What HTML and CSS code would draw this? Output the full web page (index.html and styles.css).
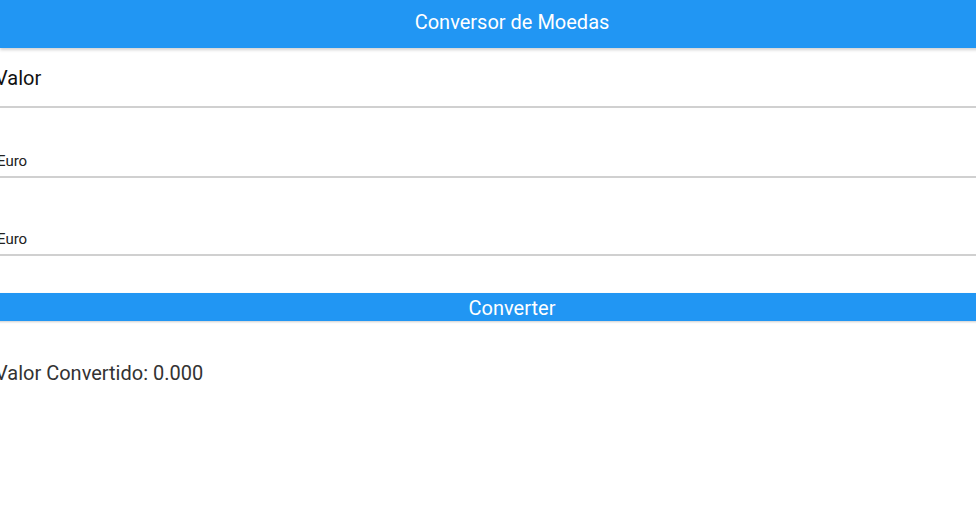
FILE: index.html
```html
<!DOCTYPE html>
<html lang="pt">
<head>
<meta charset="utf-8">
<title>Conversor de Moedas</title>
<link rel="stylesheet" href="styles.css">
</head>
<body>
<div class="page">
<header class="appbar">Conversor de Moedas</header>
<main class="content">
  <div class="field field-input"><span class="field-text">Valor</span></div>
  <div class="field field-select"><span class="select-text">Euro</span></div>
  <div class="field field-select"><span class="select-text">Euro</span></div>
  <button class="btn" type="button">Converter</button>
  <p class="result">Valor Convertido: 0.000</p>
</main>
</div>
</body>
</html>
```
FILE: styles.css
```css
html, body {
  margin: 0;
  padding: 0;
  background: #fff;
  font-family: Roboto, "Noto Sans", sans-serif;
  overflow: hidden;
}
.page {
  width: 1024px;
}
.appbar {
  height: 48px;
  box-sizing: border-box;
  padding-bottom: 4px;
  background: #2196F3;
  color: #fff;
  font-size: 20px;
  display: flex;
  align-items: center;
  justify-content: center;
  box-shadow: 0 2px 3px rgba(0,0,0,0.18);
  position: relative;
  z-index: 1;
}
.content {
  margin-left: -3px;
  display: flex;
  flex-direction: column;
}
.field {
  border-bottom: 2px solid #d0d0d0;
  display: flex;
  align-items: flex-end;
}
.field-input {
  height: 58px;
  align-items: center;
}
.field-text {
  font-size: 20px;
  color: #111;
  padding-top: 2px;
  margin-left: -2px;
}
.field-select {
  box-sizing: border-box;
  height: 70px;
  padding-bottom: 6px;
}
.field-select + .field-select {
  height: 78px;
}
.select-text {
  font-size: 15px;
  color: #222;
}
.btn {
  margin-top: 37px;
  height: 28px;
  border: 0;
  background: #2196F3;
  color: #fff;
  font-family: Roboto, "Noto Sans", sans-serif;
  font-size: 20px;
  padding: 3px 0 0;
  box-shadow: 0 1px 2px rgba(0,0,0,0.2);
  line-height: 25px;
  width: calc(100% + 3px);
  box-sizing: border-box;
}
.result {
  margin: 40px 0 0 -2px;
  font-size: 20px;
  color: #333;
}
```
